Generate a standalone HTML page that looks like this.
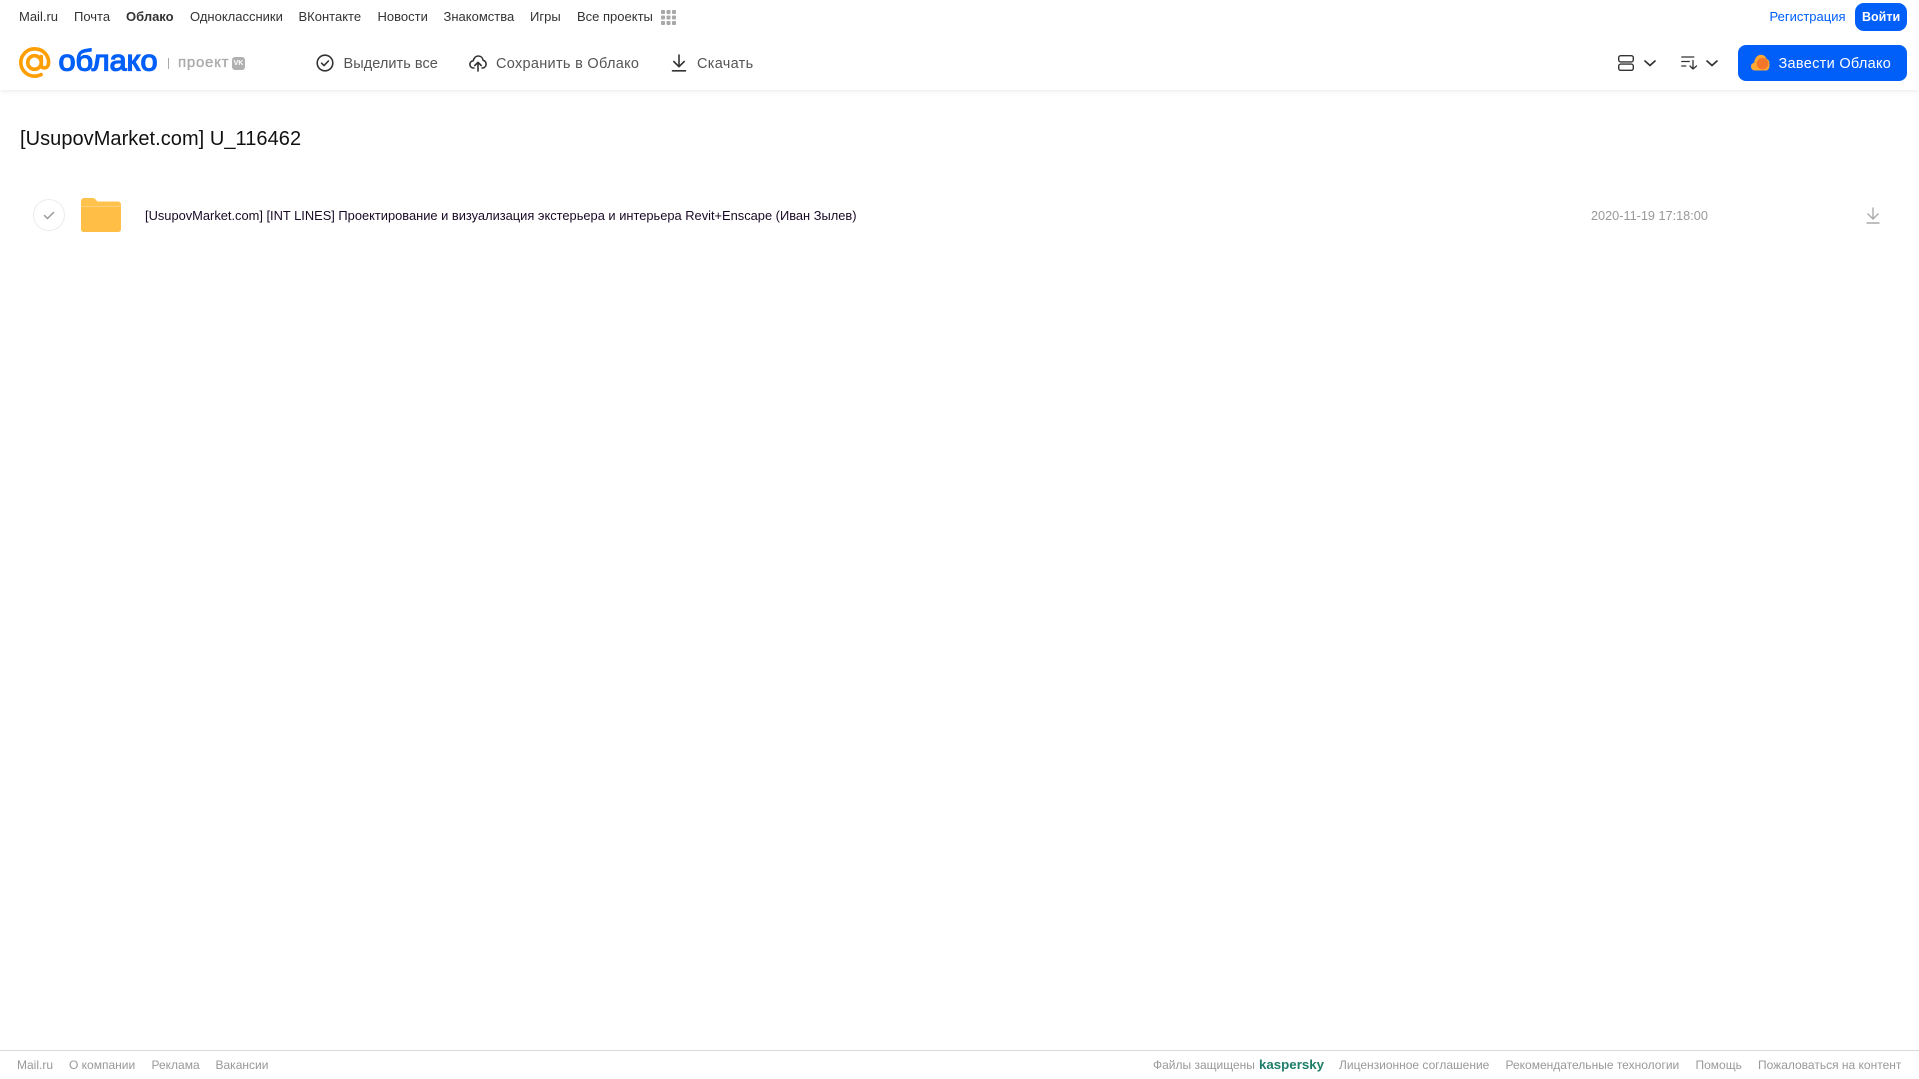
<!DOCTYPE html>
<html lang="ru"><head><meta charset="utf-8"><title>Облако</title>
<style>
html,body{margin:0;padding:0;background:#fff}
body{width:1919px;height:1079px;position:relative;overflow:hidden;font-family:"Liberation Sans",Arial,sans-serif}
.t{position:absolute;white-space:nowrap;line-height:16px}
.n{top:9px;font-size:13px;color:#333}
.b{top:55.5px;font-size:14.5px;color:#555;letter-spacing:.3px}
.f{top:1057px;font-size:12px;color:#999}
svg{position:absolute;overflow:visible}
#hdr{position:absolute;left:0;top:0;width:1919px;height:90px;background:#fff;box-shadow:0 1px 5px rgba(0,0,0,.09)}
</style></head><body>
<div id="hdr"></div>
<span class="t n" style="left:19px">Mail.ru</span>
<span class="t n" style="left:74px">Почта</span>
<span class="t n" style="left:126px;font-weight:bold">Облако</span>
<span class="t n" style="left:190px">Одноклассники</span>
<span class="t n" style="left:298.5px">ВКонтакте</span>
<span class="t n" style="left:377.5px">Новости</span>
<span class="t n" style="left:443.5px">Знакомства</span>
<span class="t n" style="left:530px">Игры</span>
<span class="t n" style="left:577px">Все проекты</span>
<svg style="left:661px;top:10px" width="15" height="15" fill="#a8a8a8"><rect x="0" y="0" width="4" height="4" rx="1"/><rect x="5.5" y="0" width="4" height="4" rx="1"/><rect x="11" y="0" width="4" height="4" rx="1"/><rect x="0" y="5.5" width="4" height="4" rx="1"/><rect x="5.5" y="5.5" width="4" height="4" rx="1"/><rect x="11" y="5.5" width="4" height="4" rx="1"/><rect x="0" y="11" width="4" height="4" rx="1"/><rect x="5.5" y="11" width="4" height="4" rx="1"/><rect x="11" y="11" width="4" height="4" rx="1"/></svg>
<span class="t n" style="left:1769.5px;color:#005ff9">Регистрация</span>
<div style="position:absolute;left:1855px;top:3px;width:52px;height:28px;border-radius:9px;background:#005ff9"></div>
<span class="t n" style="left:1862px;color:#fff;font-weight:bold;font-size:12.5px">Войти</span>

<svg style="left:19px;top:47px" width="32" height="32" viewBox="0 0 32 32" fill="none" stroke="#ff9e00" stroke-width="3.6"><circle cx="15.5" cy="15.5" r="6.8"/><path d="M22.3 9.5V18c0 4 5.8 4 7-.2C31 10 25 1.8 15.5 1.8 8 1.8 1.8 8 1.8 15.5S8 29.2 15.5 29.2c2.5 0 4.6-.5 6.6-1.6" stroke-linecap="round"/></svg>
<svg style="left:56px;top:40px" width="106" height="40"><text x="2.500" y="30.500" font-family="Liberation Sans" font-size="29.500" fill="#005ff9" stroke="#005ff9" stroke-width="1.300" textLength="99" lengthAdjust="spacingAndGlyphs">облако</text></svg>
<div style="position:absolute;left:168px;top:58px;width:1px;height:11px;background:#aaa"></div>
<span class="t" style="left:178px;top:55px;font-size:15px;color:#aaa;letter-spacing:.75px;-webkit-text-stroke:.35px #aaa">проект</span>
<div style="position:absolute;left:232px;top:57px;width:13px;height:13px;border-radius:3px;background:#b0b0b0;color:#fff;font-size:7px;font-weight:bold;line-height:13px;text-align:center">VK</div>

<svg style="left:316px;top:54px" width="18" height="18" fill="none" stroke="#333" stroke-width="1.6"><circle cx="9" cy="9" r="7.8"/><path d="M5.6 9.2l2.4 2.4 4.4-4.6" stroke-linecap="round" stroke-linejoin="round"/></svg>
<span class="t b" style="left:343.5px;letter-spacing:.05px">Выделить все</span>
<svg style="left:469px;top:54px" width="18" height="18" fill="none" stroke="#333" stroke-width="1.6" stroke-linecap="round" stroke-linejoin="round"><path d="M5 14H3.8C2 13.6.9 12 .9 10.4c0-2 1.5-3.4 3.3-3.6C5 3.8 7 2 9.3 2c2.500 0 4.400 1.800 4.800 4.300 1.800.3 3 1.900 3 3.800 0 2-1.500 3.600-3.400 3.900H13"/><path d="M9 17V8.500M5.800 11.500L9 8.300l3.200 3.200"/></svg>
<span class="t b" style="left:496px">Сохранить в Облако</span>
<svg style="left:671px;top:54px" width="16" height="18" fill="none" stroke="#333" stroke-width="1.6" stroke-linejoin="round" stroke-linecap="round"><path d="M8 1v11.500M2.800 7.500L8 12.700l5.200-5.200M1.500 16.800h13"/></svg>
<span class="t b" style="left:697px">Скачать</span>

<svg style="left:1618px;top:55px" width="16" height="16" fill="none" stroke="#333" stroke-width="1.4"><rect x=".7" y=".7" width="14.600" height="6.200" rx="2"/><rect x=".7" y="9.100" width="14.600" height="6.200" rx="2"/></svg>
<svg style="left:1644px;top:60px" width="12" height="7" fill="none" stroke="#333" stroke-width="1.700" stroke-linecap="round" stroke-linejoin="round"><path d="M1 1l5 4.500L11 1"/></svg>
<svg style="left:1681px;top:56px" width="17" height="14" fill="none" stroke="#333" stroke-width="1.300" stroke-linecap="round" stroke-linejoin="round"><path d="M.8 1h12M.8 5.500h7.500M.8 10h4M12 4.500V13M9 10l3 3 3.500-3"/></svg>
<svg style="left:1706px;top:60px" width="12" height="7" fill="none" stroke="#333" stroke-width="1.700" stroke-linecap="round" stroke-linejoin="round"><path d="M1 1l5 4.500L11 1"/></svg>

<div style="position:absolute;left:1738px;top:45px;width:169px;height:36px;border-radius:8px;background:#005ff9"></div>
<svg style="left:1751px;top:54px" width="20" height="17"><path d="M4 16.500C1.500 16.500 0 14.700 0 12.500 0 10.500 1.300 9 3.200 8.700 3.600 4 6.500 .8 10 .8c2.800 0 4.800 1.800 5.500 4.200 2.500.5 3 2.800 3 5.700 0 3.300-1 5.800-4 5.800z" fill="#ffa930"/><circle cx="11.500" cy="9.700" r="5.800" fill="#f4762b"/></svg>
<span class="t b" style="left:1778.5px;color:#fff">Завести Облако</span>

<span class="t" style="left:20px;top:126.500px;font-size:20px;line-height:24px;color:#111;letter-spacing:.05px">[UsupovMarket.com] U_116462</span>

<div style="position:absolute;left:33px;top:199px;width:30px;height:30px;border:1px solid #ececec;border-radius:50%"></div>
<svg style="left:43px;top:211px" width="12" height="9" fill="none" stroke="#999" stroke-width="1.500" stroke-linecap="round" stroke-linejoin="round"><path d="M1.500 4.500l3 3L10.500 1.500"/></svg>
<svg style="left:81px;top:198px" width="40" height="34"><path d="M0 3a3 3 0 0 1 3-3h8.500c2 0 3 1 4 2.500.5.700 1 1 2 1H37a3 3 0 0 1 3 3V31a3 3 0 0 1-3 3H3a3 3 0 0 1-3-3z" fill="#ffc34d"/><path d="M0 9h40v22a3 3 0 0 1-3 3H3a3 3 0 0 1-3-3z" fill="#ffbe45"/><rect x="0" y="8" width="40" height="1" fill="#ffd27a"/></svg>
<span class="t" style="left:145px;top:207.500px;font-size:12.870px;color:#1a0a26">[UsupovMarket.com] [INT LINES] Проектирование и визуализация экстерьера и интерьера Revit+Enscape (Иван Зылев)</span>
<span class="t" style="left:1591px;top:207.500px;font-size:12.700px;color:#999">2020-11-19 17:18:00</span>
<svg style="left:1866px;top:207px" width="14" height="17" fill="none" stroke="#aaa" stroke-width="1.400"><path d="M7 .5v11.500M1.500 6.500L7 12l5.500-5.500M.5 16h13"/></svg>

<div style="position:absolute;left:0;top:1050px;width:1919px;height:1px;background:#d9d9d9"></div>
<span class="t f" style="left:17px">Mail.ru</span>
<span class="t f" style="left:69px">О компании</span>
<span class="t f" style="left:151.500px">Реклама</span>
<span class="t f" style="left:215.500px">Вакансии</span>
<span class="t f" style="left:1153px">Файлы защищены</span>
<span class="t f" style="left:1259px;font-weight:bold;color:#1d7d68;font-size:13.300px">kaspersky</span>
<span class="t f" style="left:1339px">Лицензионное соглашение</span>
<span class="t f" style="left:1505.500px">Рекомендательные технологии</span>
<span class="t f" style="left:1695.500px">Помощь</span>
<span class="t f" style="left:1758px">Пожаловаться на контент</span>
</body></html>
